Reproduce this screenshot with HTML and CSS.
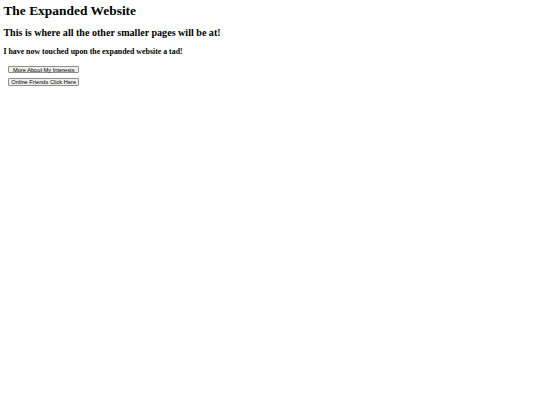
FILE: index.html
```html
<!DOCTYPE html>
<html>
<head>
<meta charset="utf-8">
<link rel="stylesheet" href="styles.css">
</head>
<body class="page">
<h1 class="title">The Expanded Website</h1>
<h2 class="subtitle">This is where all the other smaller pages will be at!</h2>
<h3 class="note">I have now touched upon the expanded website a tad!</h3>
<div class="links">
  <button class="btn">More About My Interests</button>
  <button class="btn">Online Friends Click Here</button>
</div>
</body>
</html>
```
FILE: styles.css
```css
html, body { background: #fff; }
.page {
  margin: 0;
  padding: 3.4px;
  font-family: "Liberation Serif", "Times New Roman", serif;
  color: #000;
}
.title {
  font-size: 13.44px;
  line-height: 15.5px;
  margin: 0 0 8px;
  font-weight: bold;
}
.subtitle {
  font-size: 10.08px;
  line-height: 11.6px;
  margin: 0 0 8.7px;
  font-weight: bold;
}
.note {
  font-size: 7.86px;
  line-height: 9px;
  margin: 0 0 9.7px;
  font-weight: bold;
}
.links {
  display: flex;
  flex-direction: column;
  align-items: flex-start;
  gap: 5px;
  padding-left: 4.6px;
}
.btn {
  font-family: "Liberation Sans", Arial, sans-serif;
  font-size: 5.7px;
  line-height: 6px;
  width: 71.5px;
  padding: 0;
  height: 7.6px;
  text-align: center;
  background: #efefef;
  border: 0.8px solid #8f8f8f;
  border-radius: 1px;
  color: #000;
}
```
